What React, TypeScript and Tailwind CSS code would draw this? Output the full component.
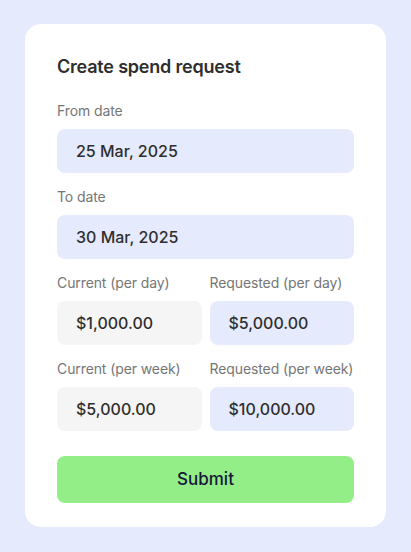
import React from 'react';

const font = { fontFamily: 'Inter, "Noto Sans", sans-serif' };

function Field({ label, value, tone = 'blue' }: { label: string; value: string; tone?: 'blue' | 'gray' }) {
  return (
    <div className="flex flex-col">
      <label className="text-[14px] leading-[20px] text-[#767676] whitespace-nowrap tracking-[-0.1px]">{label}</label>
      <div
        className={`mt-2 h-[44px] flex items-center px-[19px] rounded-[8px] text-[16px] font-medium text-[#2e2e2e] ${
          tone === 'blue' ? 'bg-[#e5ebfd]' : 'bg-[#f5f5f5]'
        }`}
      >
        {value}
      </div>
    </div>
  );
}

export default function App() {
  return (
    <div className="min-h-screen w-full bg-[#e5ebfd] px-[25px] pt-[24px] pb-[25px]" style={font}>
      <div className="bg-white rounded-[16px] px-[32px] pt-[32px] pb-[24px]">
        <h1 className="text-[18px] leading-[22px] font-semibold text-[#2e2e2e] tracking-[-0.2px]">Create spend request</h1>

        <div className="mt-[23px] flex flex-col gap-[14px]">
          <Field label="From date" value="25 Mar, 2025" />
          <Field label="To date" value="30 Mar, 2025" />
          <div className="grid grid-cols-2 gap-x-2 gap-y-[14px]">
            <Field label="Current (per day)" value="$1,000.00" tone="gray" />
            <Field label="Requested (per day)" value="$5,000.00" />
            <Field label="Current (per week)" value="$5,000.00" tone="gray" />
            <Field label="Requested (per week)" value="$10,000.00" />
          </div>
        </div>

        <button className="mt-[25px] w-full h-[47px] rounded-[8px] bg-[#93ee87] text-[17px] font-medium text-[#16163a]">
          Submit
        </button>
      </div>
    </div>
  );
}
